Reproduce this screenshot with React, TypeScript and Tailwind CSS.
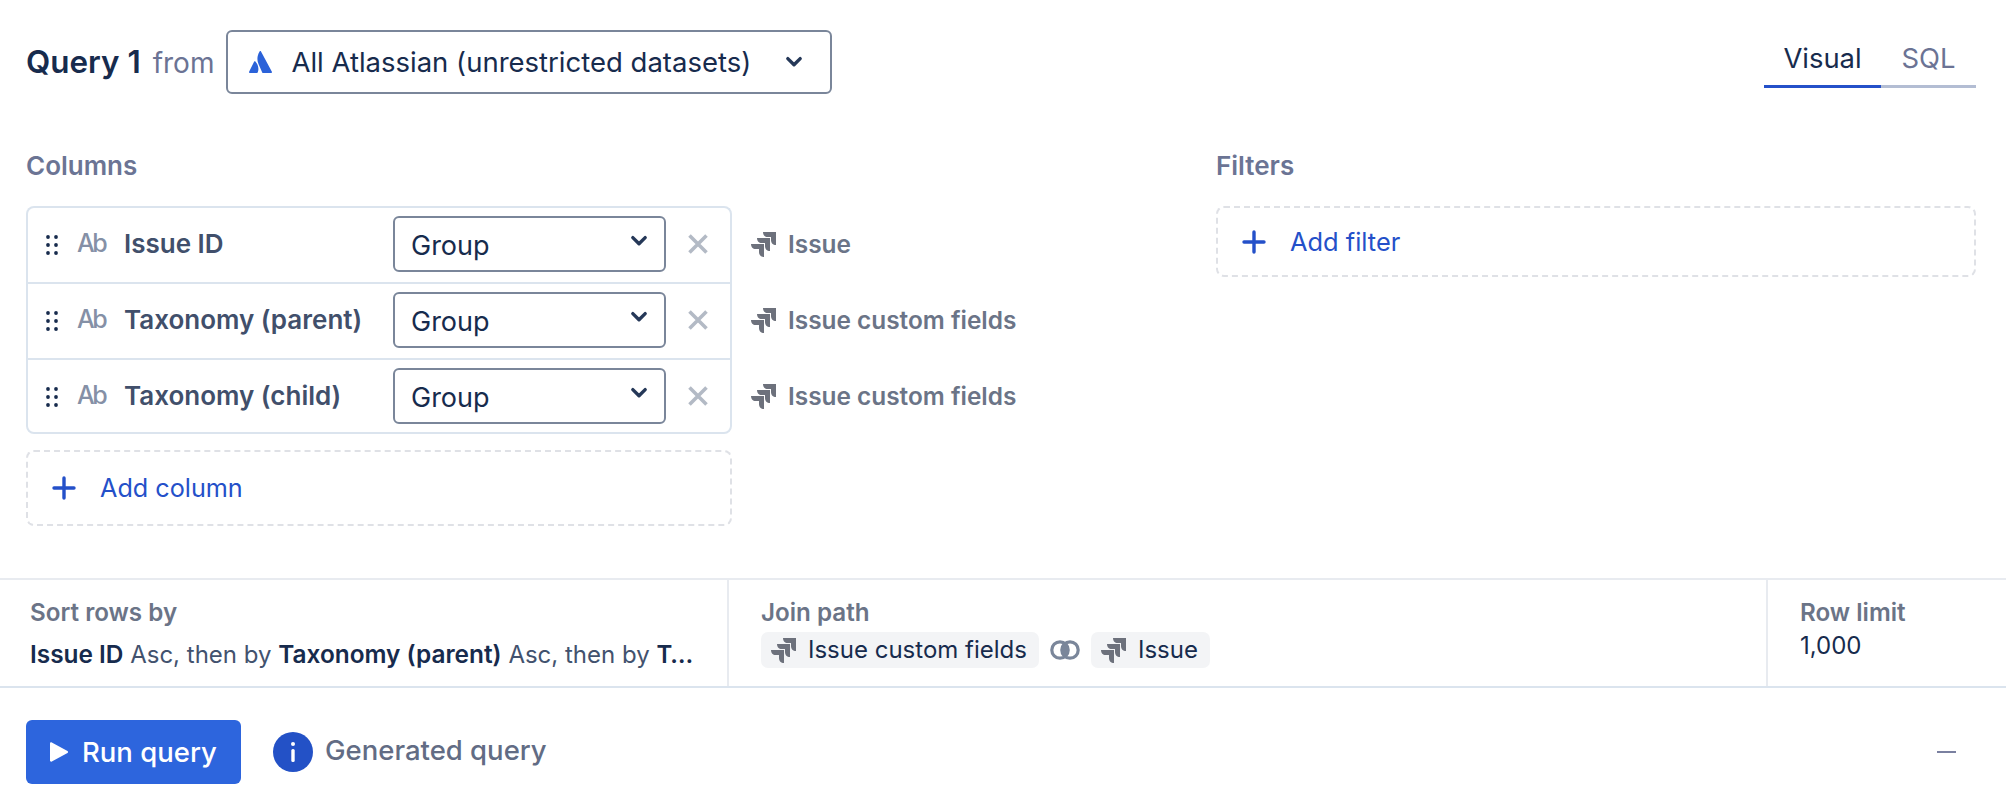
import React from "react";

const JiraIcon = ({ className = "" }: { className?: string }) => (
  <svg viewBox="0 0 25 25" className={className} fill="#6d717c">
    {[[12, 0], [6, 6], [0, 12]].map(([x, y]) => (
      <path key={x} transform={`translate(${x} ${y})`} d="M0 0H13V13C10 13 8 11 8 8V5H4.5C2 5 0 3 0 0Z" />
    ))}
  </svg>
);

const Chevron = ({ className = "" }: { className?: string }) => (
  <svg viewBox="0 0 16 10" className={className} fill="none" stroke="currentColor" strokeWidth="3" strokeLinecap="round" strokeLinejoin="round">
    <path d="M2.5 2L8 7.5 13.5 2" />
  </svg>
);

const Plus = () => (
  <svg viewBox="0 0 24 24" className="w-[24px] h-[24px] shrink-0" fill="none" stroke="#2450c9" strokeWidth="3.4" strokeLinecap="round">
    <path d="M12 2V22M2 12H22" />
  </svg>
);

const Dots = () => (
  <svg viewBox="0 0 12 20" className="w-[12px] h-[20px] shrink-0" fill="#172b4d">
    {[2, 10, 18].map((y) => (
      <g key={y}>
        <circle cx="2" cy={y} r="1.9" />
        <circle cx="10" cy={y} r="1.9" />
      </g>
    ))}
  </svg>
);

const rows = [
  { name: "Issue ID", source: "Issue" },
  { name: "Taxonomy (parent)", source: "Issue custom fields" },
  { name: "Taxonomy (child)", source: "Issue custom fields" },
];

const Row = ({ name, source, i }: { name: string; source: string; i: number }) => (
  <div className="flex items-center h-[76px]">
    <div
      className={
        i === 0
          ? "w-[706px] h-[76px] flex items-center border-x-2 border-t-2 border-[#dbe4ee] rounded-t-[8px] pl-[18px]"
          : i === 1
          ? "w-[706px] h-[76px] flex items-center border-x-2 border-t-2 border-[#dbe4ee] pl-[18px]"
          : "w-[706px] h-[76px] flex items-center border-x-2 border-y-2 border-[#dbe4ee] rounded-b-[8px] pl-[18px] pt-[2px]"
      }
    >
      <Dots />
      <span className="ml-[19px] w-[47px] text-[25px] tracking-[-2.4px] font-medium text-[#8590a6] mb-[3px]">Ab</span>
      <span className="w-[269px] text-[26px] font-semibold text-[#414f6b] whitespace-nowrap mb-[3px]">{name}</span>
      <div className="w-[273px] h-[56px] border-2 border-[#7a869a] rounded-[6px] flex items-center justify-between pl-[16px] pr-[16px] mt-[-2px]">
        <span className="text-[27px] text-[#172b4d] mt-[4px]">Group</span>
        <Chevron className="w-[18px] h-[12px] text-[#253858] mb-[7px]" />
      </div>
      <svg viewBox="0 0 20 20" className="w-[20px] h-[20px] ml-[22px] mb-[2px]" fill="none" stroke="#b3bac5" strokeWidth="3.6">
        <path d="M1.5 1.5L18.5 18.5M18.5 1.5L1.5 18.5" />
      </svg>
    </div>
    <JiraIcon className="w-[25px] h-[25px] ml-[19px] shrink-0" />
    <span className="ml-[12px] mt-[1px] text-[24.4px] font-semibold text-[#6b7487] whitespace-nowrap">{source}</span>
  </div>
);

const Chip = ({ text }: { text: string }) => (
  <div className="h-[36px] pl-[10px] pr-[12px] bg-[#f3f4f6] rounded-[7px] flex items-center gap-[12px]">
    <JiraIcon className="w-[25px] h-[25px]" />
    <span className="text-[24px] text-[#172b4d] whitespace-nowrap">{text}</span>
  </div>
);

export default function App() {
  return (
    <div className="w-full h-[812px] bg-white flex flex-col font-['Inter',sans-serif] overflow-hidden">
      <div className="h-[150px] pt-[30px] pl-[26px] pr-[30px] flex justify-between items-start">
        <div className="flex items-center h-[64px]">
          <span className="text-[31.4px] font-semibold text-[#172b4d] whitespace-nowrap mt-[1px]">Query 1</span>
          <span className="ml-[12px] mt-[1px] text-[28px] text-[#6b7394] whitespace-nowrap">from</span>
          <div className="ml-[12px] w-[606px] h-[64px] border-2 border-[#7a869a] rounded-[6px] flex items-center pl-[21px] pr-[27px]">
            <svg viewBox="0 0 23 22" className="w-[23px] h-[22px] shrink-0" fill="#2b62d9">
              <path d="M6.4 10.5C6 10 5.5 10 5.2 10.6L.1 20.8C-.2 21.4.2 22 .8 22H8c.3 0 .6-.2.7-.5C10.200 18.400 9.300 13.500 6.400 10.500Z" />
              <path d="M10.600.500C8 4.600 7.800 9.400 9.500 12.900L13 20.900c.2.600.5 1.100 1.100 1.100h8.100c.6 0 1-.6.7-1.200L12 .500C11.700-.100 10.900-.100 10.600.500Z" />
            </svg>
            <span className="ml-[19px] mt-[1px] text-[27.5px] text-[#172b4d] whitespace-nowrap flex-1">All Atlassian (unrestricted datasets)</span>
            <Chevron className="w-[18px] h-[12px] text-[#253858]" />
          </div>
        </div>
        <div className="flex flex-col w-[212px]">
          <div className="flex h-[58px]">
            <div className="w-[117px] h-[58px] border-b-[3px] border-[#2450c9] flex justify-center items-center">
              <span className="mt-[2px] text-[27.4px] text-[#172b4d]">Visual</span>
            </div>
            <div className="w-[95px] h-[58px] border-b-[3px] border-[#b3bdd3] flex justify-center items-center">
              <span className="mt-[2px] text-[27.4px] text-[#6b7394]">SQL</span>
            </div>
          </div>
        </div>
      </div>

      <div className="flex h-[428px] pl-[26px] pr-[30px]">
        <div className="w-[1190px] flex flex-col">
          <div className="h-[56px] mt-[-4px] pb-[4px] box-content text-[26px] font-semibold text-[#6b7494]">Columns</div>
          <div className="flex flex-col">
            {rows.map((r, i) => (
              <Row key={r.name} name={r.name} source={r.source} i={i} />
            ))}
          </div>
          <div className="mt-[16px] w-[706px] h-[76px] border-2 border-dashed border-[#dfe1e6] rounded-[8px] flex items-center pl-[24px] gap-[24px]">
            <Plus />
            <span className="mt-[2px] text-[25.2px] text-[#2450c9]">Add column</span>
          </div>
        </div>
        <div className="flex-1 flex flex-col">
          <div className="h-[56px] mt-[-4px] pb-[4px] box-content text-[26px] font-semibold text-[#6b7494]">Filters</div>
          <div className="h-[71px] border-2 border-dashed border-[#dfe1e6] rounded-[8px] flex items-center pl-[24px] gap-[24px]">
            <Plus />
            <span className="mt-[2px] text-[25.4px] text-[#2450c9]">Add filter</span>
          </div>
        </div>
      </div>

      <div className="h-[110px] flex border-t-2 border-[#e8ebf0] border-b-2 border-b-[#dbe4ee]">
        <div className="w-[729px] border-r-2 border-[#e8ebf0] pl-[30px] pt-[15px] flex flex-col">
          <span className="text-[24.2px] font-semibold text-[#6b7487]">Sort rows by</span>
          <div className="mt-[5px] text-[24px] text-[#42526e] whitespace-nowrap">
            <span className="font-semibold text-[24.4px] text-[#172b4d]">Issue ID</span> Asc, then by{" "}
            <span className="font-semibold text-[24.4px] text-[#172b4d]">Taxonomy (parent)</span> Asc, then by{" "}
            <span className="font-semibold text-[#172b4d]">T…</span>
          </div>
        </div>
        <div className="w-[1039px] border-r-2 border-[#e8ebf0] pl-[32px] pt-[15px] flex flex-col">
          <span className="text-[24.2px] font-semibold text-[#6b7487]">Join path</span>
          <div className="mt-[1px] flex items-center">
            <Chip text="Issue custom fields" />
            <svg viewBox="0 0 30 20" className="w-[30px] h-[20px] mx-[11px]">
              <circle cx="10" cy="10" r="8.200" fill="none" stroke="#7a869a" strokeWidth="3.2" />
              <circle cx="20" cy="10" r="8.200" fill="none" stroke="#7a869a" strokeWidth="3.2" />
              <path d="M15 2.500C20 6 20 14 15 17.500C10 14 10 6 15 2.500Z" fill="#7a869a" />
            </svg>
            <Chip text="Issue" />
          </div>
        </div>
        <div className="flex-1 pl-[32px] pt-[15px] flex flex-col">
          <span className="text-[24.2px] font-semibold text-[#6b7487]">Row limit</span>
          <span className="mt-[-3px] text-[24px] text-[#172b4d]">1,000</span>
        </div>
      </div>

      <div className="flex-1 flex items-start pl-[26px] pr-[50px] pt-[32px] justify-between">
        <div className="flex items-center">
          <div className="w-[215px] h-[64px] bg-[#2d65dd] rounded-[6px] flex items-center pl-[23px] gap-[13px]">
            <svg viewBox="0 0 20 20" className="w-[20px] h-[20px]" fill="#ffffff">
              <path d="M1 1.500C1 .5 2 0 2.800.500L18.500 9C19.300 9.500 19.300 10.500 18.500 11L2.800 19.500C2 20 1 19.500 1 18.500Z" />
            </svg>
            <span className="mt-[1px] text-[27.5px] font-medium text-white">Run query</span>
          </div>
          <div className="ml-[32px] w-[40px] h-[40px] rounded-full bg-[#2351c6] flex items-center justify-center">
            <svg viewBox="0 0 4 20" className="w-[4px] h-[20px]" fill="#ffffff">
              <circle cx="2" cy="2" r="2" />
              <rect x="0.300" y="7" width="3.400" height="13" rx="1.500" />
            </svg>
          </div>
          <span className="ml-[12px] mb-[2px] text-[27.5px] font-medium text-[#626c84]">Generated query</span>
        </div>
        <div className="w-[19px] h-[2px] bg-[#7a80a0] mt-[31px]" />
      </div>
    </div>
  );
}
